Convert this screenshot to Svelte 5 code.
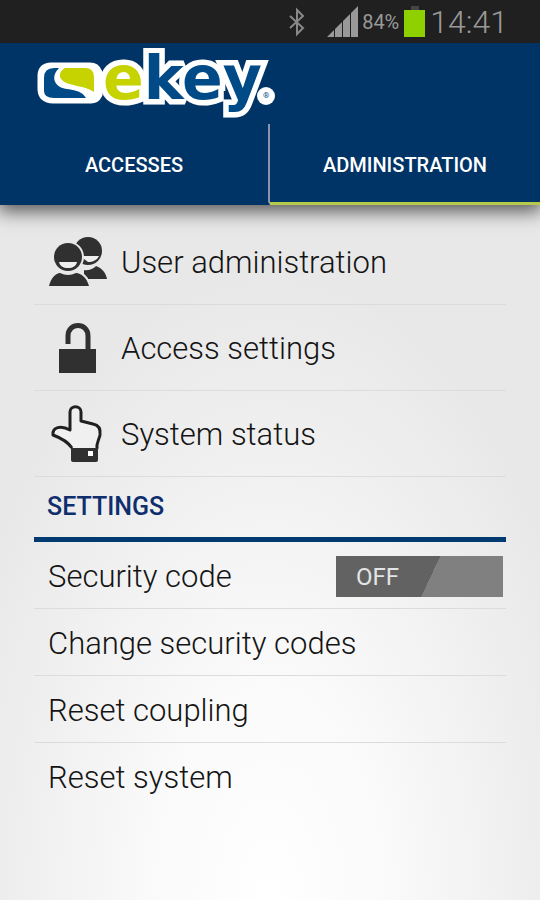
<script>
  let tab = 'administration';
  let securityCode = false;
  const battery = 84;

  const tabs = [
    { id: 'accesses', label: 'ACCESSES' },
    { id: 'administration', label: 'ADMINISTRATION' }
  ];

  const menu = [
    { icon: 'users', label: 'User administration' },
    { icon: 'lock', label: 'Access settings' },
    { icon: 'hand', label: 'System status' }
  ];

  const actions = ['Change security codes', 'Reset coupling', 'Reset system'];
</script>

<div class="screen">
  <div class="status">
    <svg class="bluetooth" width="20" height="30" viewBox="0 0 20 30" aria-label="Bluetooth">
      <path d="M3 9 L16 21 L10 27 V3 L16 9 L3 21" />
    </svg>
    <svg class="signal" width="32" height="31" viewBox="0 0 32 31" aria-label="Signal">
      <path d="M0 31 L7 24 V31 Z M8 31 V23 L15 16 V31 Z M16 31 V15 L23 8 V31 Z M24 31 V7 L31 0 V31 Z" />
    </svg>
    <span class="percent">{battery}%</span>
    <svg class="battery" width="21" height="31" viewBox="0 0 21 31" aria-label="Battery">
      <rect x="7" y="0" width="8" height="5" fill="#444" />
      <rect x="0" y="4" width="21" height="27" fill="#8fd000" />
    </svg>
    <span class="clock">14:41</span>
  </div>

  <header>
    <svg class="logo" width="250" height="72" viewBox="0 0 250 72" aria-label="ekey">
      <defs>
        <!-- lime for the first letter, blue for the rest -->
        <linearGradient id="letters" gradientUnits="userSpaceOnUse" x1="0" y1="0" x2="220" y2="0">
          <stop offset="0.5" stop-color="#c6d300" />
          <stop offset="0.5" stop-color="#004b87" />
        </linearGradient>
      </defs>
      <path class="outline" d="M17 20 H56 Q61 20 63 25 V46 Q61 50 57 50 H19 Q9 50 9 41 V28 Q9 20 17 20 Z" />
      <text class="name" x="69" y="51" fill="url(#letters)">ekey</text>
      <path d="M10 30 Q10 20 20 20 H25 C18 27 19 35 26 39 C35 43 46 40 52 50 H20 Q10 50 10 43 Z" fill="#004b87" />
      <path d="M31 20 H51 Q60 20 60 29 V44 C50 37 33 38 28 32 C24 28 26 23 31 20 Z" fill="#c6d300" />
      <circle cx="232" cy="48" r="9" fill="#fff" />
      <text class="reg" x="229" y="50">®</text>
    </svg>
    <nav>
      {#each tabs as t}
        <button type="button" class:active={tab === t.id} on:click={() => (tab = t.id)}>{t.label}</button>
      {/each}
    </nav>
  </header>

  <main>
    {#each menu as item}
      <button type="button" class="row menu-row">
        <span class="icon">
          {#if item.icon === 'users'}
            <svg width="60" height="52" viewBox="0 0 60 52">
              <circle cx="40" cy="14" r="14" fill="#303030" />
              <path d="M32 19 H51 C49 23 45 25 40 25 Z" fill="#eee" />
              <path d="M36 42 V33 C42 34 46 31 48 29 C54 31 58 36 59 42 Z" fill="#303030" />
              <circle cx="20" cy="20" r="16" fill="#e8e8e8" />
              <circle cx="20" cy="20" r="14" fill="#303030" />
              <path d="M11 25 H29 C28 29 25 31 20 31 C15 31 12 29 11 25 Z" fill="#eee" />
              <path d="M0 51 C1 39 8 34 12 34 Q20 39 28 34 C35 34 42 40 43 51 Z" fill="#e8e8e8" />
              <path d="M1 49 C3 41 8 36 12 36 Q20 40 28 36 C33 36 39 41 41 49 Z" fill="#303030" />
            </svg>
          {:else if item.icon === 'lock'}
            <svg width="60" height="52" viewBox="0 0 60 52">
              <path d="M20 21 V13 C20 -1 40 -1 40 13 V27" fill="none" stroke="#303030" stroke-width="5" />
              <rect x="11" y="26" width="37" height="24" fill="#303030" />
            </svg>
          {:else}
            <svg width="60" height="60" viewBox="0 0 60 60">
              <path
                d="M24 43 C20 37 13 33 5 30 C4 22 13 20 22 25 V7 C22 0 33 0 33 7 V16 L45 19 C50 20 53 23 52 30 C51 35 48 38 49 44"
                fill="#f0f0f0" stroke="#202020" stroke-width="3" stroke-linejoin="round" />
              <path d="M23 43 H50 V55 Q50 57 48 57 H25 Q23 57 23 55 Z" fill="#303030" />
              <rect x="40" y="46" width="5" height="5" fill="#fff" />
            </svg>
          {/if}
        </span>
        {item.label}
      </button>
    {/each}

    <h2>SETTINGS</h2>

    <label class="row">
      Security code
      <input class="sr-only" type="checkbox" bind:checked={securityCode} />
      <span class="switch" class:on={securityCode}>{securityCode ? 'ON' : 'OFF'}</span>
    </label>
    {#each actions as action}
      <button type="button" class="row">{action}</button>
    {/each}
  </main>
</div>

<style>
:global(body) { margin:0; background:#e8e8e8; }
.screen {
  min-height:100vh;
  display:flex;
  flex-direction:column;
  font-family:Roboto, sans-serif;
  color:#141414;
  background:radial-gradient(ellipse 62% 70% at 50% 100%, #fff 0%, #fafafa 35%, #e8e8e8 100%);
}
button { font:inherit; color:inherit; background:none; border:0; padding:0; cursor:pointer; }
.sr-only { position:absolute; width:1px; height:1px; margin:-1px; overflow:hidden; clip:rect(0 0 0 0); appearance:none; }

.status { z-index:1; display:flex; align-items:center; justify-content:flex-end; height:43px; padding-right:32px; background:#202020; color:#999; }
.bluetooth { margin-right:20px; fill:none; stroke:#888; stroke-width:2; }
.signal { margin-right:3px; fill:#999; }
.percent { font-size:20px; margin-right:5px; }
.battery { margin-right:5px; }
.clock { font-size:32px; font-weight:300; }

header { background:#003366; box-shadow:0 4px 18px 2px rgba(0,0,0,.65); }
.logo { display:block; margin-left:34px; padding:5px 0 4px; }
.logo .name { font-family:"DejaVu Sans", sans-serif; font-weight:bold; font-size:60px; paint-order:stroke; }
.logo .name, .outline { stroke:#fff; stroke-width:11; stroke-linejoin:miter; stroke-miterlimit:2; }
.logo .outline { fill:#fff; }
.logo .reg { font-size:8px; fill:#004b87; }
nav { display:grid; grid-template-columns:1fr 1fr; }
nav button { height:81px; padding-top:4px; color:#fff; font-size:20px; font-weight:500; border-bottom:3px solid transparent; }
nav button:first-child { border-right:2px solid #8c93ac; }
nav .active { border-bottom-color:#b5c94c; }

main { padding:14px 34px 0; }
.row {
  display:flex;
  align-items:center;
  width:100%;
  height:67px;
  padding:2px 3px 0 14px;
  box-sizing:border-box;
  border-bottom:1px solid #dcdcdc;
  font-size:31px;
  font-weight:300;
  text-align:left;
}
.row:last-child { border-bottom:0; }
.menu-row { height:86px; }
.icon { display:flex; width:60px; margin-right:13px; }
h2 { margin:0; padding:0 13px; font-size:25px; font-weight:500; line-height:60px; color:#0f2e6e; border-bottom:5px solid #003a70; }
.switch {
  width:167px;
  height:41px;
  margin-left:auto;
  padding-left:20px;
  box-sizing:border-box;
  line-height:43px;
  font-size:24px;
  font-weight:400;
  color:#e4e4e4;
  background:linear-gradient(115deg, #626262 56%, #808080 56%);
}
.switch.on { background:linear-gradient(115deg, #808080 43%, #8fae1c 43%); }
</style>
